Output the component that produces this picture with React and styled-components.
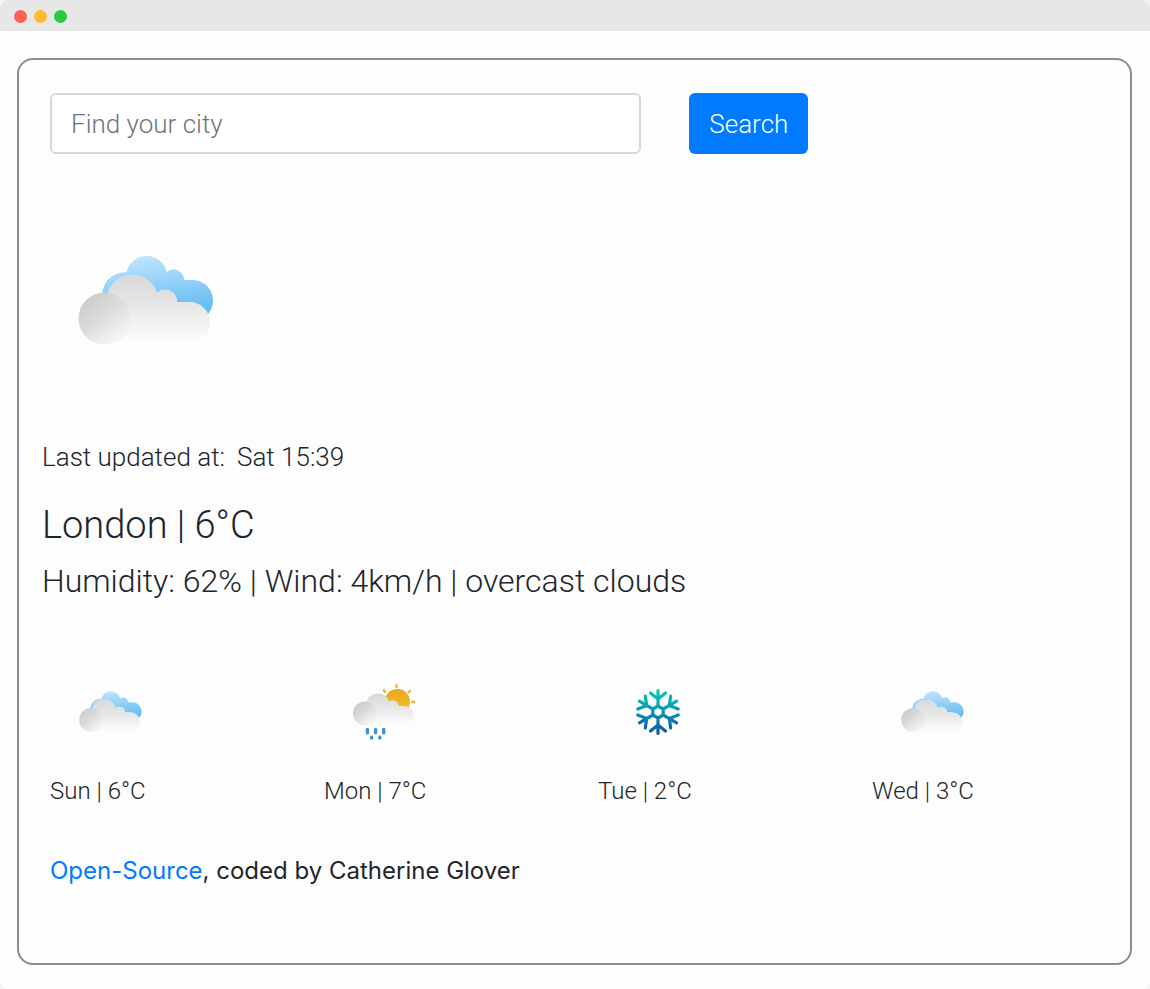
import React from "react";
import styled, { createGlobalStyle } from "styled-components";

const GlobalStyle = createGlobalStyle`
  *, *::before, *::after { box-sizing: border-box; }
  body {
    margin: 0;
    background: #f4f4f4;
    color: #212529;
    font-family: Roboto, "Liberation Sans", sans-serif;
    font-weight: 300;
  }
`;

const Window = styled.div`
  display: flex;
  flex-direction: column;
  min-height: 100vh;
  background: #fdfdfd;
  border-radius: 8px;
  overflow: hidden;
`;

const TitleBar = styled.header`
  display: flex;
  align-items: center;
  gap: 7px;
  height: 31px;
  padding: 1px 14px 0;
  background: #e7e7e7;
`;

const Dot = styled.span`
  width: 13px;
  height: 13px;
  border-radius: 50%;
  background: ${(p) => p.$color};
`;

const Card = styled.main`
  flex: 1;
  margin: 27px 18px 24px 17px;
  padding: 33px 0 40px 23px;
  border: 2px solid #8c8c8c;
  border-radius: 16px;
`;

const Inset = styled.div`
  margin-left: 8px;
`;

const SearchForm = styled.form`
  display: grid;
  grid-template-columns: 7fr 5fr;
  margin: 0 -16px 0 8px;
`;

const Field = styled.label`
  display: block;
  padding-right: 48px;
`;

const CityInput = styled.input`
  display: block;
  width: 100%;
  height: 61px;
  padding: 0 19px;
  border: 2px solid #d3d8dd;
  border-radius: 6px;
  background: #fff;
  color: #495057;
  font: inherit;
  font-size: 26px;
  &::placeholder { color: #6c757d; opacity: 1; }
`;

const SearchButton = styled.button`
  justify-self: start;
  height: 61px;
  padding: 0 20px;
  border: 0;
  border-radius: 6px;
  background: #007bff;
  color: #fff;
  font: inherit;
  font-size: 26px;
  cursor: pointer;
`;

const IconFrame = styled.div`
  display: flex;
  align-items: center;
  justify-content: center;
  width: ${(p) => p.$size}px;
  height: ${(p) => p.$size}px;
`;

const Current = styled.section`
  padding-top: 51px;
`;

const Updated = styled.p`
  display: flex;
  gap: 12px;
  margin: 40px 0 24px;
  font-size: 26px;
  line-height: 40px;
`;

const City = styled.h1`
  margin: 0 0 12px;
  font-size: 38px;
  font-weight: 300;
  line-height: 48px;
`;

const Details = styled.h2`
  margin: 0;
  font-size: 32px;
  font-weight: 300;
  line-height: 40px;
`;

const Forecast = styled.ul`
  display: grid;
  grid-template-columns: repeat(4, 1fr);
  margin: 51px -16px 0 8px;
  padding: 0;
  list-style: none;
`;

const DayLabel = styled.div`
  padding-top: 3px;
  font-size: 24px;
  line-height: 32px;
`;

const Footer = styled.footer`
  margin: 44px 0 0 8px;
  font-family: Inter, "Liberation Sans", sans-serif;
  font-size: 24px;
  font-weight: 400;
  line-height: 40px;
`;

const SourceLink = styled.a`
  color: #007bff;
  text-decoration: none;
`;

const GREY_BODY =
  "M27 88 L27 62 Q27 50 30 36 A26 26 0 0 1 79 37 A12 12 0 0 1 99 46 L112 46 A21 21 0 0 1 132 66 A22 22 0 0 1 110 88 Z";

function GreyCloud({ id }) {
  return (
    <>
      <defs>
        <linearGradient id={`${id}-body`} x1="0" y1="0" x2="0" y2="1">
          <stop offset="0" stopColor="#d8d8d8" />
          <stop offset="0.5" stopColor="#e9e9e9" />
          <stop offset="0.98" stopColor="#fdfdfd" />
        </linearGradient>
        <linearGradient id={`${id}-puff`} x1="0.2" y1="0.05" x2="0.85" y2="0.8">
          <stop offset="0" stopColor="#cbcbcb" />
          <stop offset="0.5" stopColor="#dcdcdc" />
          <stop offset="1" stopColor="#efefef" stopOpacity="0.6" />
        </linearGradient>
      </defs>
      <path d={GREY_BODY} fill={`url(#${id}-body)`} />
      <circle cx="26.5" cy="62.5" r="26" fill={`url(#${id}-puff)`} />
    </>
  );
}

function CloudIcon({ id, width, height }) {
  return (
    <svg width={width} height={height} viewBox="0 0 136 90" role="img" aria-label="Overcast clouds">
      <defs>
        <linearGradient id={`${id}-sky`} x1="0" y1="0" x2="0.25" y2="1">
          <stop offset="0" stopColor="#c6e8ff" />
          <stop offset="1" stopColor="#69bef3" />
        </linearGradient>
      </defs>
      <path
        d="M23.5 44 Q24 17 48.7 16 A20.5 20.5 0 0 1 88.7 16 A10.5 10.5 0 0 1 106 24 L114 24 A20.5 20.5 0 0 1 129 59 L60 60 Z"
        fill={`url(#${id}-sky)`}
      />
      <path d={GREY_BODY} fill="#fdfdfd" />
      <GreyCloud id={id} />
    </svg>
  );
}

function RainIcon() {
  return (
    <svg width="120" height="120" viewBox="0 0 120 120" role="img" aria-label="Rain showers">
      <defs>
        <linearGradient id="sun" x1="0" y1="0" x2="0" y2="1">
          <stop offset="0" stopColor="#e8a61c" />
          <stop offset="1" stopColor="#f7c62c" />
        </linearGradient>
      </defs>
      <circle cx="73.3" cy="49.7" r="12.7" fill="url(#sun)" />
      <path
        d="M72.5 32.3V36M59.2 37.6L61.8 40.7M86.6 38.2L83.9 41M87.3 50H91"
        stroke="#f0b232"
        strokeWidth="2.3"
      />
      <g transform="translate(28.7 32.7) scale(0.4625)">
        <GreyCloud id="rain" />
      </g>
      <path
        d="M43.4 77.5V80.7M51.6 77.5V80.7M59.7 77.5V80.7M47.6 85.3V86M55.8 85.3V86"
        stroke="#3f92cb"
        strokeWidth="3.4"
        strokeLinecap="round"
      />
    </svg>
  );
}

function SnowIcon() {
  return (
    <svg width="120" height="120" viewBox="0 0 120 120" role="img" aria-label="Snow">
      <defs>
        <linearGradient id="ice" gradientUnits="userSpaceOnUse" x1="0" y1="37" x2="0" y2="83">
          <stop offset="0" stopColor="#06cdb5" />
          <stop offset="0.5" stopColor="#0b93b3" />
          <stop offset="1" stopColor="#0c52a3" />
        </linearGradient>
      </defs>
      <path
        d="M60 54L65.2 57V63L60 66L54.8 63V57Z
           M60 54V38.5M52.5 41L60 47L67.5 41
           M65.2 57L78.6 49.2M72.7 44L71.3 53.5L80.2 57
           M65.2 63L78.6 70.8M80.2 63L71.3 66.5L72.7 76
           M60 66V81.5M67.5 79L60 73L52.5 79
           M54.8 63L41.4 70.8M47.3 76L48.7 66.5L39.8 63
           M54.8 57L41.4 49.2M39.8 57L48.7 53.5L47.3 44"
        fill="none"
        stroke="url(#ice)"
        strokeWidth="3.2"
        strokeLinecap="round"
        strokeLinejoin="round"
      />
    </svg>
  );
}

const DAYS = [
  { day: "Sun", temp: 6, icon: <CloudIcon id="sun-cloud" width={63} height={42} /> },
  { day: "Mon", temp: 7, icon: <RainIcon /> },
  { day: "Tue", temp: 2, icon: <SnowIcon /> },
  { day: "Wed", temp: 3, icon: <CloudIcon id="wed-cloud" width={63} height={42} /> },
];

export default function App() {
  return (
    <>
      <GlobalStyle />
      <Window>
        <TitleBar>
          <Dot $color="#ff5f57" />
          <Dot $color="#febc2e" />
          <Dot $color="#28c840" />
        </TitleBar>
        <Card>
          <SearchForm onSubmit={(e) => e.preventDefault()}>
            <Field>
              <CityInput type="search" placeholder="Find your city" aria-label="Find your city" />
            </Field>
            <SearchButton type="submit">Search</SearchButton>
          </SearchForm>
          <Current>
            <Inset>
              <IconFrame $size={192}>
                <CloudIcon id="now" width={136} height={90} />
              </IconFrame>
            </Inset>
            <Updated>
              <span>Last updated at:</span>
              <span>Sat 15:39</span>
            </Updated>
            <City>London | 6°C</City>
            <Details>Humidity: 62% | Wind: 4km/h | overcast clouds</Details>
          </Current>
          <Forecast>
            {DAYS.map(({ day, temp, icon }) => (
              <li key={day}>
                <IconFrame $size={120}>{icon}</IconFrame>
                <DayLabel>
                  {day} | {temp}°C
                </DayLabel>
              </li>
            ))}
          </Forecast>
          <Footer>
            <SourceLink href="#source">Open-Source</SourceLink>, coded by Catherine Glover
          </Footer>
        </Card>
      </Window>
    </>
  );
}
